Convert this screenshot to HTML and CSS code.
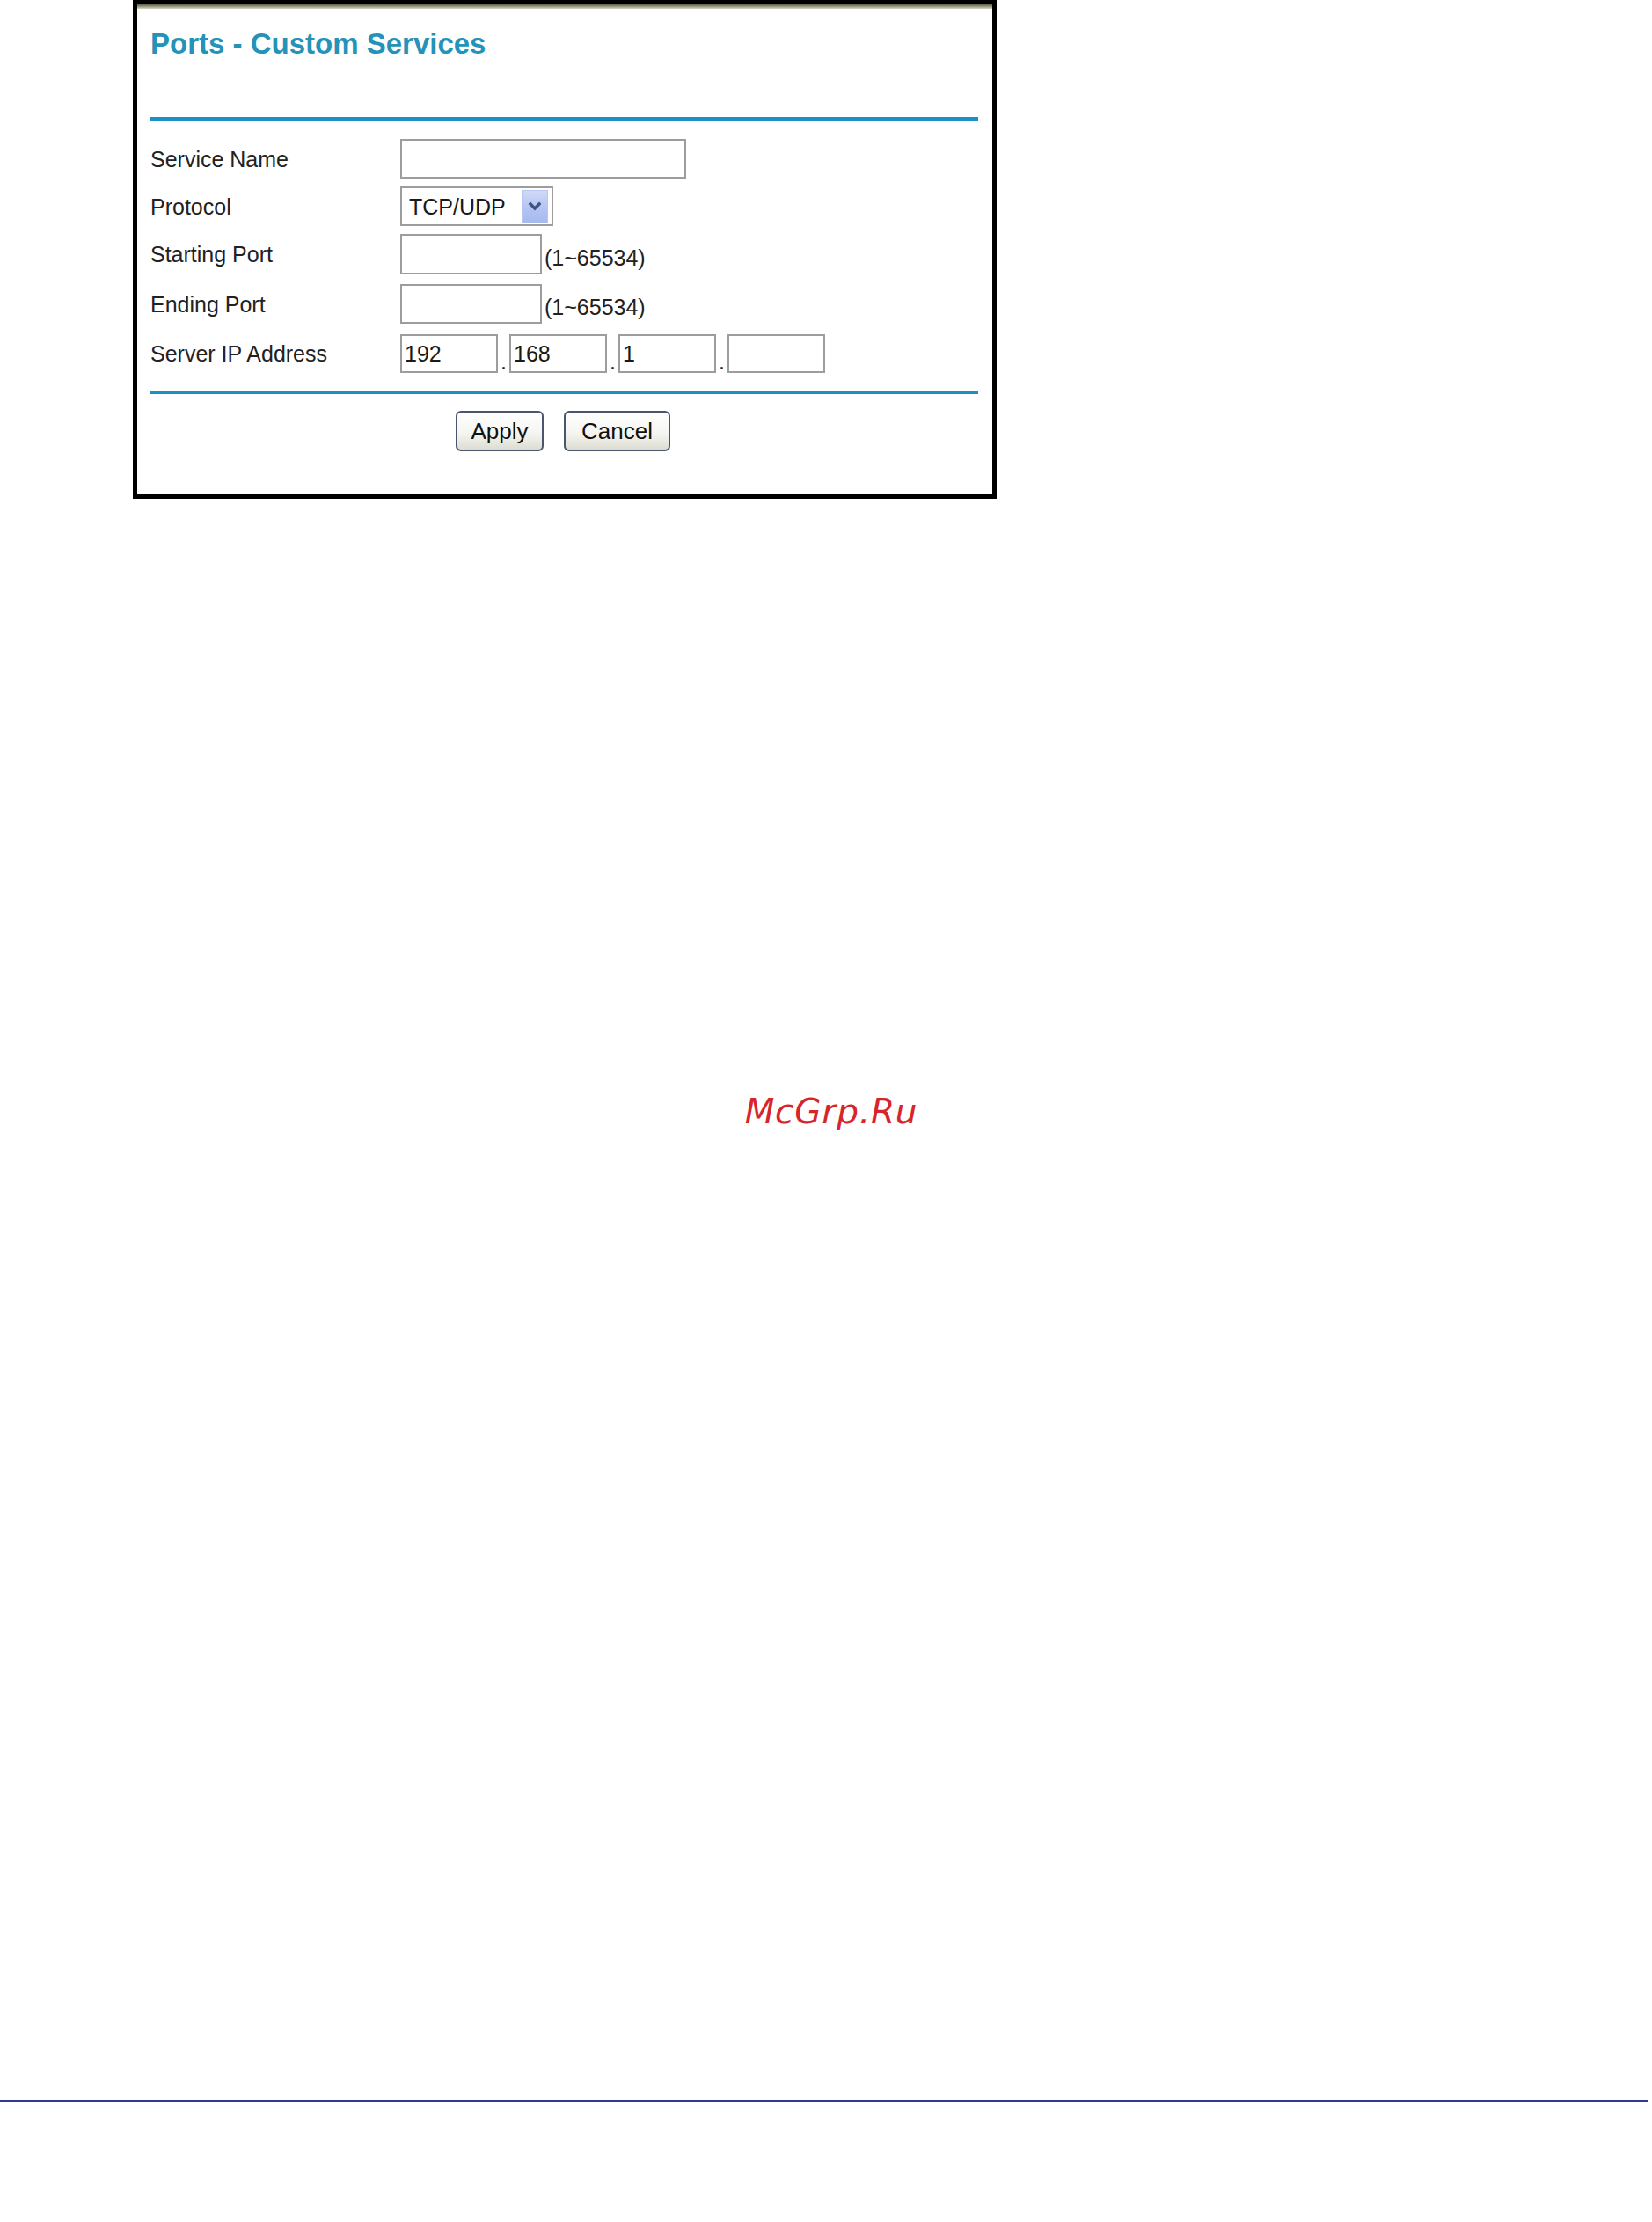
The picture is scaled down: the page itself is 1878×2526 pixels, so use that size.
FILE: index.html
```html
<!DOCTYPE html>
<html lang="en">
<head>
<meta charset="utf-8">
<title>Ports - Custom Services</title>
<link rel="stylesheet" href="styles.css">
</head>
<body>
<div class="page">
  <div class="panel">
    <div class="panel-top"></div>
    <div class="panel-body">
      <h1 class="title">Ports - Custom Services</h1>
      <div class="rule rule-top"></div>
      <div class="form">
        <div class="row row-name">
          <span class="label">Service Name</span>
          <input class="input input-name" type="text" value="">
        </div>
        <div class="row row-protocol">
          <span class="label">Protocol</span>
          <div class="select">
            <span class="select-text">TCP/UDP</span>
            <span class="select-arrow">
              <svg width="16" height="12" viewBox="0 0 16 12"><path d="M3 3 L8 8 L13 3" fill="none" stroke="#3f5387" stroke-width="3.5" stroke-linecap="square"/></svg>
            </span>
          </div>
        </div>
        <div class="row row-start">
          <span class="label">Starting Port</span>
          <input class="input input-port" type="text" value="">
          <span class="range">(1~65534)</span>
        </div>
        <div class="row row-end">
          <span class="label">Ending Port</span>
          <input class="input input-port" type="text" value="">
          <span class="range">(1~65534)</span>
        </div>
        <div class="row row-ip">
          <span class="label">Server IP Address</span>
          <input class="input input-ip" type="text" value="192">
          <span class="dot">.</span>
          <input class="input input-ip" type="text" value="168">
          <span class="dot">.</span>
          <input class="input input-ip" type="text" value="1">
          <span class="dot">.</span>
          <input class="input input-ip" type="text" value="">
        </div>
      </div>
      <div class="rule rule-bottom"></div>
      <div class="buttons">
        <button class="btn btn-apply" type="button">Apply</button>
        <button class="btn btn-cancel" type="button">Cancel</button>
      </div>
    </div>
  </div>
  <div class="watermark">McGrp.Ru</div>
  <div class="footer-rule"></div>
</div>
</body>
</html>
```
FILE: styles.css
```css
html, body {
  margin: 0;
  padding: 0;
  background: #ffffff;
}

body {
  font-family: "Liberation Sans", Arial, sans-serif;
  color: #1a1a1a;
}

.page {
  width: 1878px;
}

.panel {
  margin-left: 151px;
  width: 982px;
  height: 567px;
  box-sizing: border-box;
  border: 5px solid #000000;
  background: #ffffff;
}

.panel-top {
  height: 5px;
  background: linear-gradient(#5c5c46, #9a9a82 50%, #d6d6c6);
}

.panel-body {
  padding: 0 16px 0 15px;
}

.title {
  margin: 20px 0 0;
  font-size: 33px;
  line-height: 40px;
  font-weight: bold;
  color: #2493b9;
}

.rule {
  height: 4px;
  background: #1b90c4;
}

.rule-top {
  margin-top: 63px;
}

.rule-bottom {
  margin-top: 20px;
}

.form {
  margin-top: 21px;
}

.row {
  display: flex;
  align-items: center;
}

.row-name { height: 45px; }
.row-protocol { height: 45px; margin-top: 9px; }
.row-start { height: 46px; margin-top: 9px; }
.row-end { height: 45px; margin-top: 11px; }
.row-ip { height: 44px; margin-top: 12px; }

.label {
  width: 284px;
  flex: none;
  font-size: 25px;
  line-height: 30px;
  color: #222222;
}

.input {
  box-sizing: border-box;
  height: 100%;
  margin: 0;
  border: 2px solid #9d9d9d;
  padding: 0 3px;
  font-family: "Liberation Sans", Arial, sans-serif;
  font-size: 25px;
  color: #1a1a1a;
  background: #ffffff;
  outline: none;
  flex: none;
}

.input-name { width: 325px; }
.input-port { width: 161px; }
.input-ip { width: 111px; }

.select {
  box-sizing: border-box;
  width: 174px;
  height: 45px;
  border: 2px solid #9d9d9d;
  display: flex;
  align-items: center;
  justify-content: space-between;
  padding-left: 8px;
  background: #ffffff;
}

.select-text {
  font-size: 25px;
  line-height: 30px;
  color: #1a1a1a;
}

.select-arrow {
  box-sizing: border-box;
  width: 30px;
  height: 38px;
  margin-right: 4px;
  border: 1px solid #b7c6ee;
  background: linear-gradient(#cfdaf7, #b3c4f1 55%, #a6b9ee);
  display: flex;
  align-items: center;
  justify-content: center;
}

.range {
  align-self: flex-end;
  margin: 0 0 6px 3px;
  font-size: 25px;
  line-height: 25px;
  color: #222222;
}

.dot {
  align-self: flex-end;
  width: 13px;
  flex: none;
  text-align: center;
  font-size: 25px;
  line-height: 25px;
  color: #222222;
}

.buttons {
  display: flex;
  justify-content: center;
  gap: 23px;
  margin-top: 19px;
  padding-right: 3px;
}

.btn {
  box-sizing: border-box;
  height: 46px;
  margin: 0;
  padding: 0;
  border: 2px solid #4a5670;
  border-radius: 6px;
  background: linear-gradient(#ffffff, #f4f4ef 60%, #dcdcd2);
  font-family: "Liberation Sans", Arial, sans-serif;
  font-size: 26px;
  color: #111111;
}

.btn-apply { width: 100px; }
.btn-cancel { width: 121px; }

.watermark {
  margin-top: 677px;
  padding-left: 12px;
  text-align: center;
  font-family: "DejaVu Sans", sans-serif;
  font-style: italic;
  font-size: 39px;
  line-height: 39px;
  letter-spacing: 0.8px;
  color: #d7262b;
}

.footer-rule {
  margin-top: 1104px;
  width: 1874px;
  height: 3px;
  background: #34379a;
}
```
